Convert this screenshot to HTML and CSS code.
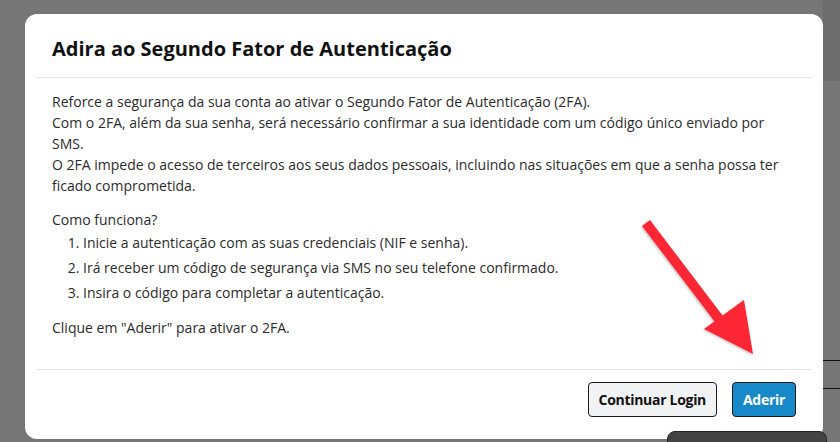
FILE: index.html
```html
<!DOCTYPE html>
<html lang="pt">
<head>
<meta charset="utf-8">
<title>Segundo Fator de Autenticação</title>
<link rel="stylesheet" href="styles.css">
</head>
<body>
<div class="page">
  <div class="modal">
    <div class="modal-header">
      <h1 class="modal-title">Adira ao Segundo Fator de Autenticação</h1>
    </div>
    <div class="modal-body">
      <p class="para">Reforce a segurança da sua conta ao ativar o Segundo Fator de Autenticação (2FA).<br>Com o 2FA, além da sua senha, será necessário confirmar a sua identidade com um código único enviado por SMS.<br>O 2FA impede o acesso de terceiros aos seus dados pessoais, incluindo nas situações em que a senha possa ter ficado comprometida.</p>
      <p class="para list-title">Como funciona?</p>
      <ol class="steps">
        <li>Inicie a autenticação com as suas credenciais (NIF e senha).</li>
        <li>Irá receber um código de segurança via SMS no seu telefone confirmado.</li>
        <li>Insira o código para completar a autenticação.</li>
      </ol>
      <p class="para">Clique em "Aderir" para ativar o 2FA.</p>
    </div>
    <div class="modal-footer">
      <button class="btn btn-light">Continuar Login</button>
      <button class="btn btn-primary">Aderir</button>
    </div>
  </div>
  <div class="side">
    <div class="side-top"></div>
    <div class="side-rest">
      <div class="side-line"></div>
      <div class="side-line"></div>
    </div>
  </div>
</div>
<div class="toast-edge"></div>
<svg class="arrow" width="130" height="150" viewBox="0 0 130 150">
  <defs>
    <filter id="sh" x="-20%" y="-20%" width="140%" height="140%">
      <feDropShadow dx="-1" dy="1" stdDeviation="1" flood-color="#000" flood-opacity="0.25"/>
    </filter>
  </defs>
  <g filter="url(#sh)" fill="#fd2634">
    <polygon points="5,7 13,1 89,101 81,107"/>
    <polygon points="67,110 107,81 116,135"/>
  </g>
</svg>
</body>
</html>
```
FILE: styles.css
```css
html, body {
  margin: 0;
  padding: 0;
}
body {
  width: 840px;
  height: 442px;
  overflow: hidden;
  background: #767676;
  font-family: "Open Sans", "DejaVu Sans", sans-serif;
  position: relative;
}
.page {
  display: flex;
  height: 442px;
}
.modal {
  margin: 14px 0 0 25px;
  width: 778px;
  height: 425px;
  padding: 0 10px;
  background: #fff;
  border-radius: 12px;
  display: flex;
  flex-direction: column;
  flex: none;
}
.modal-header {
  padding: 21px 17px 14px;
  border-bottom: 1px solid #e6e6e6;
}
.modal-title {
  margin: 0;
  font-size: 20px;
  line-height: 28px;
  font-weight: 700;
  color: #111;
}
.modal-body {
  padding: 13px 17px 16px;
  font-size: 14px;
  line-height: 21px;
  color: #2b2b2b;
  flex: 1;
}
.para {
  margin: 0 0 13px;
}
.list-title {
  margin-bottom: 2px;
}
.steps {
  margin: 0 0 14px;
  padding-left: 31px;
}
.steps li {
  margin-bottom: 4px;
}
.modal-footer {
  border-top: 1px solid #e6e6e6;
  padding: 12px 17px 22px;
  display: flex;
  justify-content: flex-end;
  gap: 15px;
}
.btn {
  height: 35px;
  padding: 0 10px;
  font-family: inherit;
  font-size: 14px;
  font-weight: 700;
  letter-spacing: -0.3px;
  border-radius: 4px;
  border: 1px solid #1b1b1b;
}
.btn-light {
  background: #f1f2f4;
  color: #111;
}
.btn-primary {
  background: #1788c8;
  color: #fff;
}
.side {
  flex: 1;
  display: flex;
  flex-direction: column;
}
.side-top {
  height: 81px;
  background: #6c6c6c;
}
.side-rest {
  flex: 1;
  padding-top: 279px;
}
.side-line {
  height: 1px;
  background: #111;
  margin-bottom: 27px;
}
.toast-edge {
  position: absolute;
  left: 667px;
  top: 431px;
  width: 158px;
  height: 20px;
  background: #434343;
  border-radius: 8px;
  border: 1px solid #222;
}
.arrow {
  position: absolute;
  left: 637px;
  top: 219px;
}
```
